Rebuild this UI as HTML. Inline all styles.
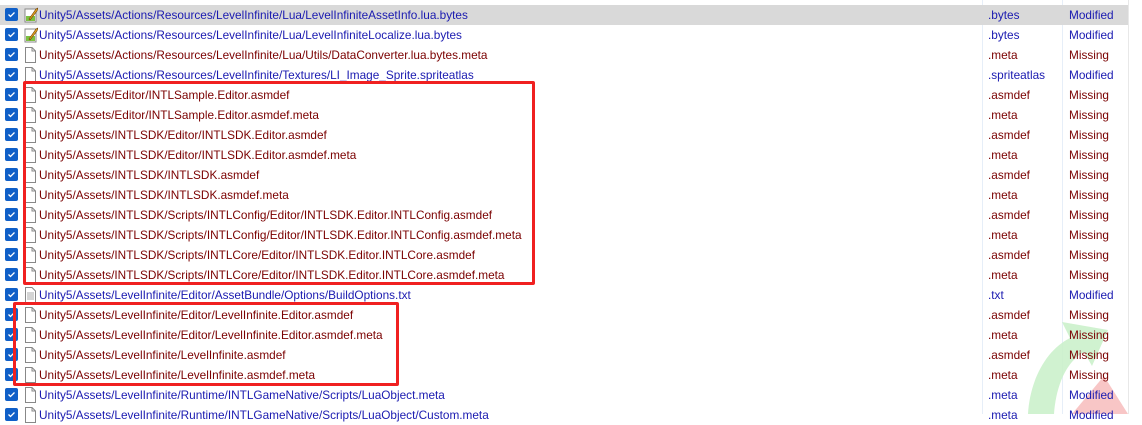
<!DOCTYPE html>
<html><head><style>
body{margin:0;width:1142px;height:414px;overflow:hidden;background:#fff;font-family:"Liberation Sans",sans-serif;font-size:11.8px;position:relative}
.row{position:absolute;left:0;width:1128px;height:20px;line-height:20px}
.row.sel{background:#d9d9d9}
.cb{position:absolute;left:5px;top:3px;width:13px;height:13px;background:#0f5fc8;border-radius:2px}
.cb svg{position:absolute;left:0;top:0}
.ic{position:absolute;left:24px;top:2px}
.p{position:absolute;left:39px;white-space:nowrap}
.e{position:absolute;left:988px}
.s{position:absolute;left:1069px}
.b{color:#1a1ab0}.r{color:#7a0000}
.vl{position:absolute;top:0;height:414px;width:1px;background:#e6eef8}
.box{position:absolute;border:3px solid #f02020;border-radius:2px}
</style></head><body>
<div class="vl" style="left:982px"></div>
<div class="vl" style="left:1062px"></div>
<div class="vl" style="left:1128px;background:#e8e8e8"></div>
<svg style="position:absolute;left:1010px;top:300px" width="132" height="114">
<path d="M18 114 C20 80 36 50 60 38 L52 22 L98 30 L82 66 L74 52 C56 62 46 86 44 114 Z" fill="#c8f0c8" opacity="0.85"/>
<path d="M62 114 L94 76 L118 114 Z" fill="#f4a0a0" opacity="0.6"/>
</svg>
<div id="rows"></div>
<div class="box" style="left:23px;top:81px;width:506px;height:198px"></div>
<div class="box" style="left:13px;top:302px;width:380px;height:78px"></div>
<script>
var d=[
["Unity5/Assets/Actions/Resources/LevelInfinite/Lua/LevelInfiniteAssetInfo.lua.bytes",".bytes","Modified","b","e"],
["Unity5/Assets/Actions/Resources/LevelInfinite/Lua/LevelInfiniteLocalize.lua.bytes",".bytes","Modified","b","e"],
["Unity5/Assets/Actions/Resources/LevelInfinite/Lua/Utils/DataConverter.lua.bytes.meta",".meta","Missing","r","f"],
["Unity5/Assets/Actions/Resources/LevelInfinite/Textures/LI_Image_Sprite.spriteatlas",".spriteatlas","Modified","b","f"],
["Unity5/Assets/Editor/INTLSample.Editor.asmdef",".asmdef","Missing","r","f"],
["Unity5/Assets/Editor/INTLSample.Editor.asmdef.meta",".meta","Missing","r","f"],
["Unity5/Assets/INTLSDK/Editor/INTLSDK.Editor.asmdef",".asmdef","Missing","r","f"],
["Unity5/Assets/INTLSDK/Editor/INTLSDK.Editor.asmdef.meta",".meta","Missing","r","f"],
["Unity5/Assets/INTLSDK/INTLSDK.asmdef",".asmdef","Missing","r","f"],
["Unity5/Assets/INTLSDK/INTLSDK.asmdef.meta",".meta","Missing","r","f"],
["Unity5/Assets/INTLSDK/Scripts/INTLConfig/Editor/INTLSDK.Editor.INTLConfig.asmdef",".asmdef","Missing","r","f"],
["Unity5/Assets/INTLSDK/Scripts/INTLConfig/Editor/INTLSDK.Editor.INTLConfig.asmdef.meta",".meta","Missing","r","f"],
["Unity5/Assets/INTLSDK/Scripts/INTLCore/Editor/INTLSDK.Editor.INTLCore.asmdef",".asmdef","Missing","r","f"],
["Unity5/Assets/INTLSDK/Scripts/INTLCore/Editor/INTLSDK.Editor.INTLCore.asmdef.meta",".meta","Missing","r","f"],
["Unity5/Assets/LevelInfinite/Editor/AssetBundle/Options/BuildOptions.txt",".txt","Modified","b","t"],
["Unity5/Assets/LevelInfinite/Editor/LevelInfinite.Editor.asmdef",".asmdef","Missing","r","f"],
["Unity5/Assets/LevelInfinite/Editor/LevelInfinite.Editor.asmdef.meta",".meta","Missing","r","f"],
["Unity5/Assets/LevelInfinite/LevelInfinite.asmdef",".asmdef","Missing","r","f"],
["Unity5/Assets/LevelInfinite/LevelInfinite.asmdef.meta",".meta","Missing","r","f"],
["Unity5/Assets/LevelInfinite/Runtime/INTLGameNative/Scripts/LuaObject.meta",".meta","Modified","b","f"],
["Unity5/Assets/LevelInfinite/Runtime/INTLGameNative/Scripts/LuaObject/Custom.meta",".meta","Modified","b","f"]];
var file='<svg class="ic" width="12" height="16"><path d="M1.5 .5H8L11.5 4V15.5H1.5Z" fill="#fff" stroke="#888"/><path d="M8 .5V4H11.5" fill="none" stroke="#888"/></svg>';
var txt='<svg class="ic" width="12" height="16"><path d="M1.5 .5H8L11.5 4V15.5H1.5Z" fill="#fff" stroke="#888"/><path d="M3 6H10M3 8H10M3 10H10M3 12H10" stroke="#aaa"/></svg>';
var ed='<svg class="ic" width="14" height="16"><rect x="1" y="2" width="11" height="13" fill="#fff" stroke="#888"/><rect x="2" y="9" width="9" height="5" fill="#7cc040"/><path d="M5 12L12 2L14 1L13 4L6 13Z" fill="#e0a020" stroke="#704000" stroke-width=".6"/></svg>';
var h='';
d.forEach(function(x,i){
var ic=x[4]=='e'?ed:x[4]=='t'?txt:file;
h+='<div class="row'+(i==0?' sel':'')+'" style="top:'+(5+20*i)+'px"><div class="cb"><svg width="13" height="13"><path d="M3.5 6.5L5.5 8.5L9.5 4.5" fill="none" stroke="#fff" stroke-width="1.3"/></svg></div>'+ic+'<span class="p '+x[3]+'">'+x[0]+'</span><span class="e '+x[3]+'">'+x[1]+'</span><span class="s '+x[3]+'">'+x[2]+'</span></div>';
});
document.getElementById('rows').innerHTML=h;
</script>
</body></html>
